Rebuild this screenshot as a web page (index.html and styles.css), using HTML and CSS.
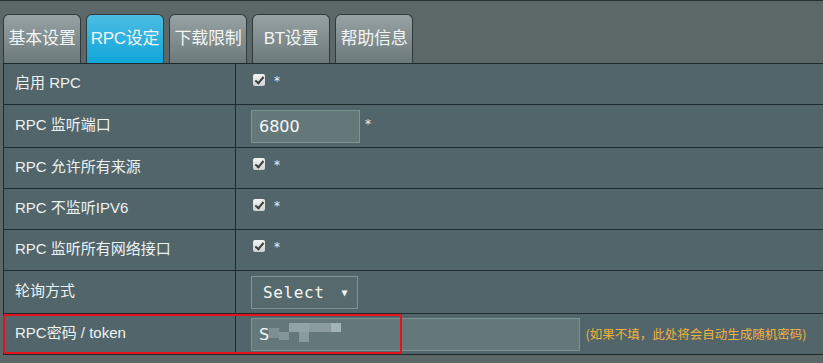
FILE: index.html
```html
<!DOCTYPE html>
<html lang="zh-CN">
<head>
  <meta charset="UTF-8">
  <title>RPC设定</title>
  <link rel="stylesheet" href="styles.css">
</head>
<body>
  <div class="page">
    <div class="tabs">
      <div class="tab">基本设置</div>
      <div class="tab active">RPC设定</div>
      <div class="tab">下载限制</div>
      <div class="tab">BT设置</div>
      <div class="tab">帮助信息</div>
    </div>

    <table class="settings">
      <tr>
        <th>启用 RPC</th>
        <td><span class="check"></span><span class="star">*</span></td>
      </tr>
      <tr class="tall">
        <th>RPC 监听端口</th>
        <td><span class="field port">6800</span><span class="star">*</span></td>
      </tr>
      <tr>
        <th>RPC 允许所有来源</th>
        <td><span class="check"></span><span class="star">*</span></td>
      </tr>
      <tr>
        <th>RPC 不监听IPV6</th>
        <td><span class="check"></span><span class="star">*</span></td>
      </tr>
      <tr>
        <th>RPC 监听所有网络接口</th>
        <td><span class="check"></span><span class="star">*</span></td>
      </tr>
      <tr class="tall">
        <th>轮询方式</th>
        <td><span class="field select">Select<span class="arrow">▼</span></span></td>
      </tr>
      <tr>
        <th>RPC密码 / token</th>
        <td>
          <span class="field token">S<span class="blur">
            <i class="b1"></i><i class="b2"></i><i class="b3"></i><i class="b4"></i><i class="b5"></i><i class="b6"></i>
          </span></span>
          <span class="hint">(如果不填，此处将会自动生成随机密码)</span>
        </td>
      </tr>
    </table>
    <div class="redbox"></div>
  </div>
</body>
</html>
```

FILE: styles.css
```css
body {
  margin: 0;
  background-color: #5b6867;
  font-family: "Liberation Sans", "Noto Sans CJK SC", sans-serif;
  color: #eef2f2;
}

.page {
  position: relative;
  border-top: 1px solid #27302f;
  padding: 13px 0 0 3px;
  height: 349px;
  overflow: hidden;
}

.tabs {
  display: flex;
  gap: 5px;
  height: 49px;
}

.tab {
  width: 78px;
  box-sizing: border-box;
  border: 1px solid #2f3a3c;
  border-bottom: none;
  border-radius: 6px 6px 0 0;
  background: linear-gradient(#97a2a4, #6c797b);
  font-size: 17px;
  line-height: 48px;
  text-align: center;
  color: #f2f5f5;
  letter-spacing: -0.3px;
  white-space: nowrap;
}

.tab.active {
  background: linear-gradient(#4bbde3, #11a6d9);
}

.settings {
  border-collapse: collapse;
  width: 830px;
  background-color: #52656a;
}

.settings th,
.settings td {
  border: 1px solid #1f2a2c;
  height: 40px;
  padding: 0;
  font-weight: normal;
  text-align: left;
  vertical-align: middle;
  line-height: 20px;
}

.settings th {
  width: 220px;
  padding: 0 0 3px 11px;
  height: 37px;
  font-size: 15px;
  color: #edf2f2;
}

.settings td {
  padding-left: 15px;
}

.settings .tall th {
  height: 39px;
}

.settings .tall td {
  height: 42px;
}

.check {
  display: inline-block;
  width: 12px;
  height: 12px;
  margin-left: 2px;
  vertical-align: middle;
  position: relative;
  top: -4px;
  background: linear-gradient(#f4f4f4, #cfd2d2);
  border-radius: 2px;
}

.check::after {
  content: "";
  position: absolute;
  left: 4px;
  top: 1px;
  width: 3px;
  height: 7px;
  border: solid #3a3f40;
  border-width: 0 2px 2px 0;
  transform: rotate(40deg);
}

.star {
  display: inline-block;
  font-family: "DejaVu Sans", sans-serif;
  font-size: 12px;
  margin-left: 9px;
  vertical-align: middle;
  position: relative;
  top: -3px;
}

.field {
  display: inline-block;
  box-sizing: border-box;
  height: 33px;
  background-color: #647779;
  border: 1px solid #7f9294;
  vertical-align: middle;
  color: #f5f8f8;
}

.port {
  width: 109px;
  padding-left: 7px;
  font-family: "DejaVu Sans", sans-serif;
  font-size: 16px;
  line-height: 31px;
}

.port + .star {
  margin-left: 5px;
  top: -2px;
}

.select {
  width: 107px;
  padding-left: 11px;
  background-color: #566a6d;
  font-family: "DejaVu Sans Mono", monospace;
  font-size: 16px;
  line-height: 31px;
  letter-spacing: 0.6px;
}

.arrow {
  font-size: 10px;
  margin-left: 17px;
  position: relative;
  top: -2px;
}

.token {
  width: 329px;
  padding-left: 7px;
  font-family: "DejaVu Sans", sans-serif;
  font-size: 16px;
  line-height: 31px;
}

.blur {
  display: inline-block;
  position: relative;
  width: 84px;
  height: 20px;
  vertical-align: middle;
  top: -2px;
}

.blur i {
  position: absolute;
  background-color: #8a9c9e;
}

.blur .b1 { left: 0; top: 5px; width: 10px; height: 10px; background-color: #7d8f91; }
.blur .b2 { left: 10px; top: 9px; width: 10px; height: 8px; background-color: #869799; }
.blur .b3 { left: 20px; top: 0; width: 20px; height: 9px; background-color: #92a3a5; }
.blur .b4 { left: 30px; top: 9px; width: 10px; height: 10px; background-color: #8a9b9d; }
.blur .b5 { left: 40px; top: 0; width: 22px; height: 9px; background-color: #899b9d; }
.blur .b6 { left: 62px; top: 0; width: 10px; height: 9px; background-color: #a4b3b4; }

.hint {
  font-family: "Noto Sans CJK SC", sans-serif;
  font-size: 12.5px;
  color: #f1b23d;
  margin-left: 1px;
  vertical-align: middle;
}

.redbox {
  position: absolute;
  left: 3px;
  top: 313px;
  width: 399px;
  height: 40px;
  box-sizing: border-box;
  border: 2px solid #e3121c;
  border-radius: 2px;
  pointer-events: none;
}
```
